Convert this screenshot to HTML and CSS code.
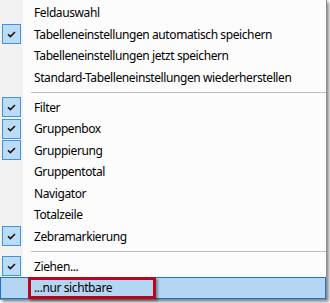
FILE: index.html
```html
<!DOCTYPE html>
<html lang="de">
<head>
<meta charset="utf-8">
<link rel="stylesheet" href="styles.css">
</head>
<body>
<div class="menu">
  <div class="item"><span class="gutter"></span><span class="label">Feldauswahl</span></div>
  <div class="item"><span class="gutter"><span class="box"><svg viewBox="0 0 9 7" class="tick"><path d="M1 3.2 L3.4 5.6 L8 1"/></svg></span></span><span class="label">Tabelleneinstellungen automatisch speichern</span></div>
  <div class="item"><span class="gutter"></span><span class="label">Tabelleneinstellungen jetzt speichern</span></div>
  <div class="item"><span class="gutter"></span><span class="label">Standard-Tabelleneinstellungen wiederherstellen</span></div>
  <div class="sep"><span class="gutter"></span><span class="line"></span></div>
  <div class="item"><span class="gutter"><span class="box"><svg viewBox="0 0 9 7" class="tick"><path d="M1 3.2 L3.4 5.6 L8 1"/></svg></span></span><span class="label">Filter</span></div>
  <div class="item"><span class="gutter"><span class="box"><svg viewBox="0 0 9 7" class="tick"><path d="M1 3.2 L3.4 5.6 L8 1"/></svg></span></span><span class="label">Gruppenbox</span></div>
  <div class="item"><span class="gutter"><span class="box"><svg viewBox="0 0 9 7" class="tick"><path d="M1 3.2 L3.4 5.6 L8 1"/></svg></span></span><span class="label">Gruppierung</span></div>
  <div class="item"><span class="gutter"></span><span class="label">Gruppentotal</span></div>
  <div class="item"><span class="gutter"></span><span class="label">Navigator</span></div>
  <div class="item"><span class="gutter"></span><span class="label">Totalzeile</span></div>
  <div class="item"><span class="gutter"><span class="box"><svg viewBox="0 0 9 7" class="tick"><path d="M1 3.2 L3.4 5.6 L8 1"/></svg></span></span><span class="label">Zebramarkierung</span></div>
  <div class="sep"><span class="gutter"></span><span class="line"></span></div>
  <div class="item"><span class="gutter"><span class="box"><svg viewBox="0 0 9 7" class="tick"><path d="M1 3.2 L3.4 5.6 L8 1"/></svg></span></span><span class="label">Ziehen...</span></div>
  <div class="item hot"><span class="gutter"></span><span class="label">...nur sichtbare</span><span class="mark"></span></div>
</div>
</body>
</html>
```
FILE: styles.css
```css
html, body {
  margin: 0;
  padding: 0;
  background: #ffffff;
}
body {
  width: 330px;
  height: 303px;
  overflow: hidden;
  font-family: "Noto Sans", "Open Sans", sans-serif;
  font-size: 12px;
  letter-spacing: -0.4px;
  color: #000;
}
.menu {
  width: 326px;
  height: 297px;
  padding-top: 2px;
  background: linear-gradient(to right, #f2f2f2 0, #f2f2f2 23px, #fcfcfc 23px);
  border-right: 1px solid #8a8a8a;
  border-bottom: 1px solid #8a8a8a;
  box-shadow: 2px 2px 3px rgba(0, 0, 0, 0.45);
  display: flex;
  flex-direction: column;
}
.item {
  position: relative;
  height: 21.5px;
  display: flex;
  align-items: center;
  flex: none;
}
.gutter {
  width: 34px;
  height: 100%;
  display: flex;
  align-items: center;
  flex: none;
}
.box {
  margin-left: 2px;
  width: 17px;
  height: 18px;
  border: 1px solid #3f93e2;
  background: #bcdbf5;
  display: flex;
  align-items: center;
  justify-content: center;
}
.tick {
  width: 9px;
  height: 7px;
  fill: none;
  stroke: #101010;
  stroke-width: 1.5;
}
.label {
  line-height: 21.5px;
  white-space: nowrap;
}
.sep {
  height: 8.5px;
  display: flex;
  flex: none;
}
.sep .gutter {
  width: 31px;
}
.sep .line {
  margin-top: 4px;
  width: 295px;
  height: 1px;
  background: #bdbdbd;
}
.hot {
  height: 22px;
  margin-top: -0.5px;
  box-sizing: border-box;
  background: #b5d6f3;
  border: 1px solid #1a73d1;
}
.hot .gutter {
  width: 33px;
}
.mark {
  position: absolute;
  left: 27px;
  top: -1px;
  width: 122px;
  height: 16px;
  border: 3px solid #b8061f;
  box-shadow: 2px 2px 2px rgba(0, 0, 0, 0.35);
}
```
